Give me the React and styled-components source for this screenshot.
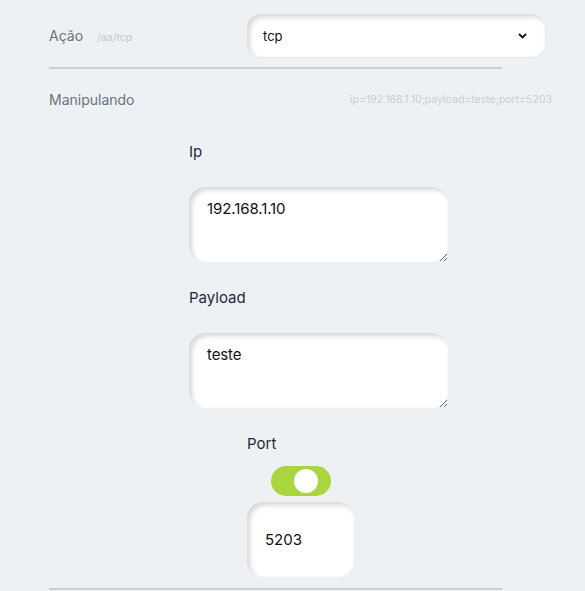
import styled, { createGlobalStyle } from "styled-components";

const GlobalStyle = createGlobalStyle`
  html, body {
    margin: 0;
    padding: 0;
    background: #eef1f4;
    font-family: Inter, "Noto Sans", sans-serif;
  }
`;

const Page = styled.div`
  width: 585px;
  height: 591px;
  overflow: hidden;
  box-sizing: border-box;
  padding: 14px 0 0 49px;
`;

const ActionRow = styled.div`
  display: flex;
  align-items: center;
  height: 43px;
`;

const LabelGroup = styled.div`
  display: flex;
  align-items: baseline;
  gap: 14px;
  width: 198px;
`;

const Label = styled.span`
  font-size: 14px;
  color: #6b7280;
`;

const Hint = styled.span`
  font-size: 10.5px;
  color: #c3c7cd;
`;

const SelectBox = styled.div`
  display: flex;
  align-items: center;
  justify-content: space-between;
  width: 298px;
  height: 43px;
  box-sizing: border-box;
  padding: 0 18px 0 16px;
  background: #fff;
  border-radius: 14px;
  box-shadow: inset 3px 3px 5px rgba(0, 0, 0, 0.16),
    1px 1px 2px rgba(0, 0, 0, 0.04);
  font-size: 13px;
  color: #111;
`;

const Divider = styled.div`
  width: 453px;
  height: 2px;
  background: #cbcfd4;
  margin-top: ${(p) => p.$top}px;
`;

const ManipRow = styled.div`
  display: flex;
  justify-content: space-between;
  align-items: center;
  width: 503px;
  margin-top: 21px;
  height: 18px;
`;

const Params = styled.span`
  font-size: 10.5px;
  color: #c9cdd2;
`;

const Field = styled.div`
  display: flex;
  flex-direction: column;
  align-items: flex-start;
  margin-left: ${(p) => p.$left}px;
  margin-top: ${(p) => p.$top}px;
`;

const FieldLabel = styled.span`
  font-size: 15px;
  line-height: 18px;
  color: #1e293b;
`;

const TextArea = styled.textarea`
  width: 259px;
  height: 75px;
  box-sizing: border-box;
  margin-top: 26px;
  padding: 12px 18px;
  border: none;
  outline: none;
  border-radius: 16px;
  background: #fff;
  box-shadow: inset 3px 3px 5px rgba(0, 0, 0, 0.16);
  font-family: Inter, "Noto Sans", sans-serif;
  font-size: 15px;
  letter-spacing: -0.1px;
  color: #111;
`;

const Toggle = styled.div`
  display: flex;
  align-items: center;
  width: 60px;
  height: 30px;
  box-sizing: border-box;
  padding-left: ${(p) => (p.$on ? 23 : 3)}px;
  margin: 13px 0 0 24px;
  border-radius: 15px;
  background: ${(p) => (p.$on ? "#a9d63e" : "#cbd0d6")};
`;

const Knob = styled.div`
  width: 24px;
  height: 24px;
  border-radius: 50%;
  background: #fff;
`;

const NumberBox = styled.input`
  width: 107px;
  height: 75px;
  box-sizing: border-box;
  margin-top: 6px;
  padding: 0 18px;
  border: none;
  outline: none;
  border-radius: 16px;
  background: #fff;
  box-shadow: inset 3px 3px 5px rgba(0, 0, 0, 0.16);
  font-family: Inter, "Noto Sans", sans-serif;
  font-size: 15px;
  color: #111;
`;

const Chevron = () => (
  <svg width="9" height="6" viewBox="0 0 9 6">
    <path d="M1 1 L4.5 4.5 L8 1" fill="none" stroke="#111" strokeWidth="1.8" />
  </svg>
);

export default function App() {
  return (
    <>
      <GlobalStyle />
      <Page>
        <ActionRow>
          <LabelGroup>
            <Label>Ação</Label>
            <Hint>/aa/tcp</Hint>
          </LabelGroup>
          <SelectBox>
            <span>tcp</span>
            <Chevron />
          </SelectBox>
        </ActionRow>
        <Divider $top={10} />
        <ManipRow>
          <Label>Manipulando</Label>
          <Params>ip=192.168.1.10;payload=teste;port=5203</Params>
        </ManipRow>
        <Field $left={140} $top={35}>
          <FieldLabel>Ip</FieldLabel>
          <TextArea defaultValue="192.168.1.10" />
        </Field>
        <Field $left={140} $top={27}>
          <FieldLabel>Payload</FieldLabel>
          <TextArea defaultValue="teste" />
        </Field>
        <Field $left={198} $top={27}>
          <FieldLabel>Port</FieldLabel>
          <Toggle $on>
            <Knob />
          </Toggle>
          <NumberBox defaultValue="5203" />
        </Field>
        <Divider $top={11} />
      </Page>
    </>
  );
}
